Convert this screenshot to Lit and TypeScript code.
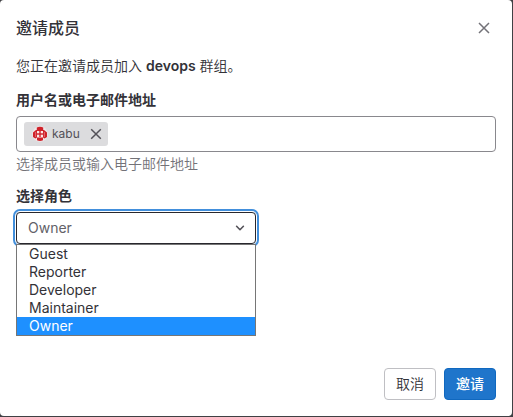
import { LitElement, html, css } from "lit";
import { customElement, state } from "lit/decorators.js";
import { classMap } from "lit/directives/class-map.js";

@customElement("app-root")
export class AppRoot extends LitElement {
  static styles = css`
    :host {
      display: block;
      box-sizing: border-box;
      width: 513px;
      height: 417px;
      padding: 0 1px 1px 0;
      background: #404044;
      overflow: hidden;
      font: 350 14px/20px Inter, "Noto Sans CJK SC", sans-serif;
      color: #333238;
    }
    * { box-sizing: border-box; }
    .modal {
      display: flex;
      flex-direction: column;
      width: 512px;
      height: 416px;
      padding: 0 16px;
      background: #fff;
      border-radius: 4px;
    }
    .header {
      display: flex;
      align-items: center;
      justify-content: space-between;
      height: 56px;
      flex: none;
    }
    h2 { margin: 0; font-size: 16px; line-height: 24px; font-weight: 500; }
    .close { display: flex; padding: 0; margin-right: 4px; border: 0; background: none; color: #737278; }
    .intro { margin: 0 0 14px; }
    strong { font-weight: 600; }
    .label { font-weight: 600; margin-bottom: 6px; }
    .tokens {
      display: flex;
      align-items: center;
      height: 36px;
      padding: 0 7px;
      border: 1px solid #89888d;
      border-radius: 4px;
    }
    .token {
      display: flex;
      align-items: center;
      width: 84px;
      height: 24px;
      padding-left: 8px;
      background: #dcdcde;
      border-radius: 3px;
      font-size: 12px;
      line-height: 16px;
      font-weight: 400;
      color: #535158;
    }
    .token span { width: 40px; padding-left: 4px; }
    .hint { margin: 2px 0 12px; color: #737278; }
    .select {
      position: relative;
      display: flex;
      align-items: center;
      justify-content: space-between;
      width: 240px;
      height: 32px;
      padding: 0 9px 0 11px;
      border: 1px solid #28272d;
      border-radius: 4px;
      box-shadow: 0 0 0 1px #fff, 0 0 0 3px #428fdc;
      color: #626168;
      font-weight: 400;
    }
    .options {
      position: absolute;
      top: 31px;
      left: -1px;
      width: 240px;
      margin: 0;
      padding: 0;
      list-style: none;
      border: 1px solid #767676;
      background: #fff;
      color: #333238;
      line-height: 18px;
    }
    .options li { padding-left: 12px; }
    .options .active { background: #1e90ff; color: #fff; }
    .footer { display: flex; justify-content: flex-end; gap: 8px; margin: auto 0 16px; }
    .btn {
      width: 52px;
      height: 32px;
      padding: 0;
      border: 1px solid #bfbfc3;
      border-radius: 4px;
      background: #fff;
      color: #333238;
      font: inherit;
    }
    .confirm { background: #1f75cb; border-color: #1068bf; color: #fff; font-weight: 500; }
    svg { display: block; flex: none; }
  `;

  @state() private role = "Owner";
  private roles = ["Guest", "Reporter", "Developer", "Maintainer", "Owner"];

  render() {
    return html`
      <div class="modal">
        <div class="header">
          <h2>邀请成员</h2>
          <button class="close" aria-label="Close">
            <svg width="16" height="16" viewBox="0 0 16 16" fill="none" stroke="currentColor" stroke-width="1.5"><path d="M3 3l10 10M13 3L3 13" /></svg>
          </button>
        </div>
        <p class="intro">您正在邀请成员加入 <strong>devops</strong> 群组。</p>
        <div class="label">用户名或电子邮件地址</div>
        <div class="tokens">
          <div class="token">
            <svg width="16" height="16" viewBox="0 0 16 16">
              <circle cx="8" cy="8" r="7.8" fill="#f0e4e6" />
              <g fill="#d0222a">
                <path d="M4.8 1.6Q8 0 11.2 1.6V4H4.8z" />
                <path d="M4 4H12L15 6.5V11L12.6 12.5 11 11.6H5L3.4 12.5 1 11V6.5z" />
                <path d="M5 14.3V12H11V14.3Q8 15.6 5 14.3z" />
              </g>
              <g fill="#fbe6e6">
                <rect x="5" y="5" width="2.3" height="2.3" />
                <rect x="8.7" y="5" width="2.3" height="2.3" />
                <rect x="5" y="8.7" width="2.3" height="2.3" />
                <rect x="8.7" y="8.7" width="2.3" height="2.3" />
              </g>
              <path d="M3.6 6v5M12.4 6v5" stroke="#e99a9d" stroke-width=".6" />
            </svg>
            <span>kabu</span>
            <svg width="16" height="16" viewBox="0 0 16 16" fill="none" stroke="#535158" stroke-width="1.5"><path d="M3.2 3.2l9.6 9.6M12.8 3.2l-9.6 9.6" /></svg>
          </div>
        </div>
        <div class="hint">选择成员或输入电子邮件地址</div>
        <div class="label">选择角色</div>
        <div class="select">
          ${this.role}
          <svg width="12" height="12" viewBox="0 0 12 12" fill="none" stroke="#535158" stroke-width="1.6" stroke-linecap="round" stroke-linejoin="round"><path d="M2.6 4.3L6 7.7l3.4-3.4" /></svg>
          <ul class="options">
            ${this.roles.map((r) => html`<li class=${classMap({ active: r === this.role })}>${r}</li>`)}
          </ul>
        </div>
        <div class="footer">
          <button class="btn">取消</button>
          <button class="btn confirm">邀请</button>
        </div>
      </div>
    `;
  }
}
